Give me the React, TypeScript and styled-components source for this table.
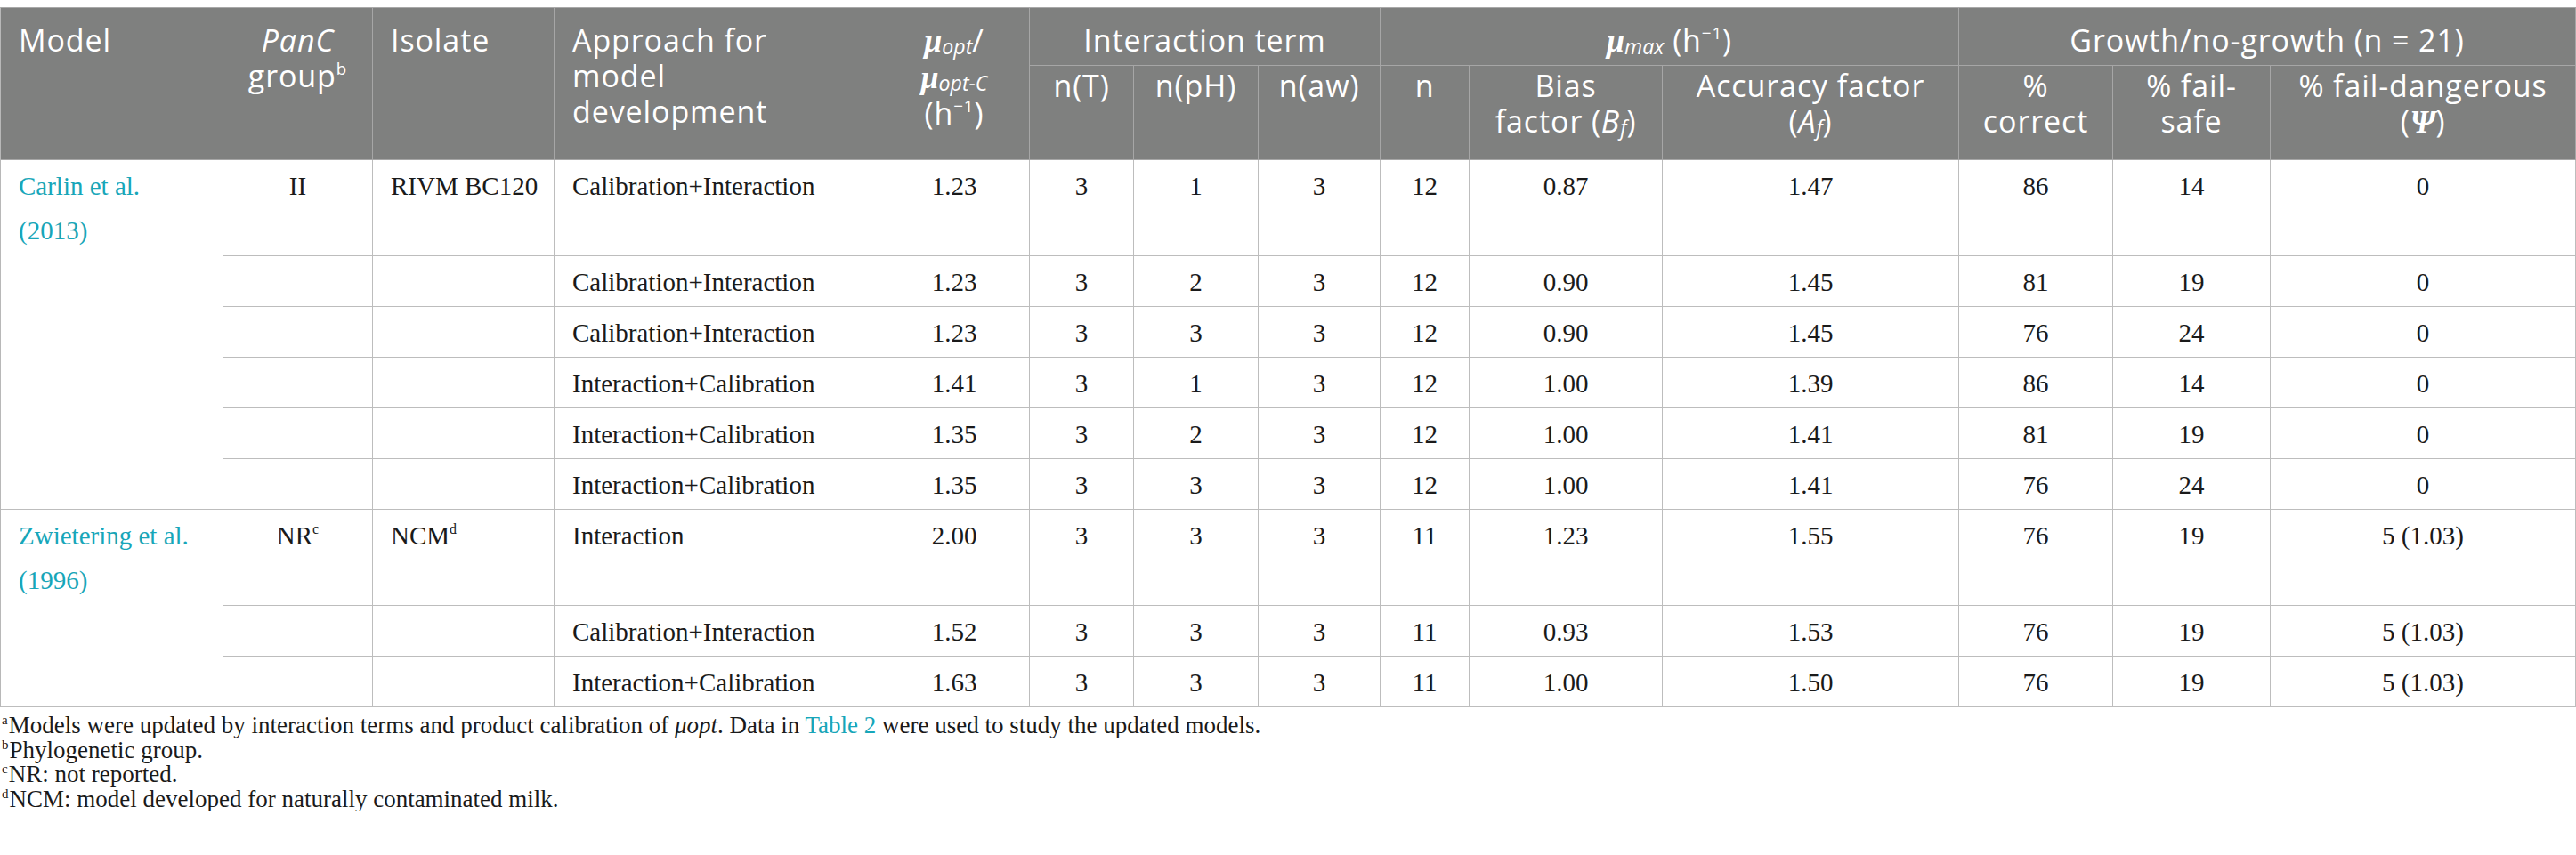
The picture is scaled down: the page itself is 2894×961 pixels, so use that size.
import styled, { createGlobalStyle } from "styled-components"

type Row = {
  model?: { name: string; year: string; span: number }
  group?: { text: string; note: string }
  isolate?: { text: string; note?: string }
  approach: string
  values: string[]
  tall?: boolean
  showGroupCells?: boolean
}

const GlobalStyle = createGlobalStyle`
  html, body {
    margin: 0;
    padding: 0;
    background: #ffffff;
  }
`

const Page = styled.div`
  padding-top: 8px;
  width: 2894px;
`

const Table = styled.table`
  width: 2893px;
  table-layout: fixed;
  border-collapse: separate;
  border-spacing: 0;
  border-top: 1px solid #a9a9a9;
  border-left: 1px solid #b8b8b8;
`

const HeadRow = styled.tr<{ $height: number }>`
  height: ${(p) => p.$height}px;
`

const HeadCell = styled.th<{ $align?: "left" | "center" }>`
  background: #7f807f;
  color: #ffffff;
  font-family: "Open Sans", "Noto Sans", sans-serif;
  font-weight: 400;
  font-size: 34px;
  letter-spacing: 0.9px;
  line-height: 40px;
  text-align: ${(p) => p.$align ?? "center"};
  vertical-align: top;
  padding: 16px 20px 7px 20px;
  border-right: 1px solid #a6a6a6;
  border-bottom: 1px solid #a6a6a6;
  white-space: nowrap;
`

// second header row sits tight under the spanning group titles
const SubHeadCell = styled(HeadCell)`
  padding-top: 2px;
`

const BodyRow = styled.tr<{ $tall?: boolean }>`
  height: ${(p) => (p.$tall ? 108 : 57)}px;
`

const Cell = styled.td<{ $align?: "left" | "center" }>`
  font-family: "Liberation Serif", "Times New Roman", serif;
  font-size: 29px;
  line-height: 50px;
  color: #1a1a1a;
  text-align: ${(p) => p.$align ?? "center"};
  vertical-align: top;
  padding: 4px 20px 2px 20px;
  border-right: 1px solid #bdbdbd;
  border-bottom: 1px solid #bdbdbd;
  white-space: nowrap;
`

const Cite = styled.span`
  color: #17a6b9;
`

const Sup = styled.sup`
  font-size: 0.55em;
  line-height: 0;
  vertical-align: 0.75em;
`

const Mu = styled.span`
  font-family: "Liberation Serif", "Times New Roman", serif;
  font-weight: 700;
  font-style: italic;
  font-size: 36px;
  letter-spacing: 0;
`

const Sub = styled.sub`
  font-style: italic;
  font-size: 0.68em;
  line-height: 0;
  vertical-align: -0.15em;
  letter-spacing: 0;
`

const Ital = styled.i`
  font-style: italic;
`

const Footnotes = styled.div`
  margin-top: 7px;
  padding-left: 2px;
  font-family: "Liberation Serif", "Times New Roman", serif;
  font-size: 27px;
  line-height: 27.5px;
  color: #1a1a1a;
`

const Note = styled.div`
  white-space: nowrap;
`

const NoteMark = styled.sup`
  font-size: 15px;
  line-height: 0;
  vertical-align: 10px;
  margin-right: 1px;
`

const widths = [250, 168, 204, 365, 169, 117, 140, 137, 100, 217, 333, 173, 177, 343]

const rows: Row[] = [
  {
    model: { name: "Carlin et al.", year: "(2013)", span: 6 },
    group: { text: "II", note: "" },
    isolate: { text: "RIVM BC120" },
    approach: "Calibration+Interaction",
    values: ["1.23", "3", "1", "3", "12", "0.87", "1.47", "86", "14", "0"],
    tall: true,
  },
  { approach: "Calibration+Interaction", values: ["1.23", "3", "2", "3", "12", "0.90", "1.45", "81", "19", "0"], showGroupCells: true },
  { approach: "Calibration+Interaction", values: ["1.23", "3", "3", "3", "12", "0.90", "1.45", "76", "24", "0"], showGroupCells: true },
  { approach: "Interaction+Calibration", values: ["1.41", "3", "1", "3", "12", "1.00", "1.39", "86", "14", "0"], showGroupCells: true },
  { approach: "Interaction+Calibration", values: ["1.35", "3", "2", "3", "12", "1.00", "1.41", "81", "19", "0"], showGroupCells: true },
  { approach: "Interaction+Calibration", values: ["1.35", "3", "3", "3", "12", "1.00", "1.41", "76", "24", "0"], showGroupCells: true },
  {
    model: { name: "Zwietering et al.", year: "(1996)", span: 3 },
    group: { text: "NR", note: "c" },
    isolate: { text: "NCM", note: "d" },
    approach: "Interaction",
    values: ["2.00", "3", "3", "3", "11", "1.23", "1.55", "76", "19", "5 (1.03)"],
    tall: true,
  },
  { approach: "Calibration+Interaction", values: ["1.52", "3", "3", "3", "11", "0.93", "1.53", "76", "19", "5 (1.03)"], showGroupCells: true },
  { approach: "Interaction+Calibration", values: ["1.63", "3", "3", "3", "11", "1.00", "1.50", "76", "19", "5 (1.03)"], showGroupCells: true },
]

function HInv() {
  return (
    <>
      (h<Sup>−1</Sup>)
    </>
  )
}

export default function App() {
  return (
    <Page>
      <GlobalStyle />
      <Table>
        <colgroup>
          {widths.map((w, i) => (
            <col key={i} style={{ width: w }} />
          ))}
        </colgroup>
        <thead>
          <HeadRow $height={64}>
            <HeadCell $align="left" rowSpan={2}>
              Model
            </HeadCell>
            <HeadCell rowSpan={2}>
              <Ital>PanC</Ital>
              <br />
              group<Sup>b</Sup>
            </HeadCell>
            <HeadCell $align="left" rowSpan={2}>
              Isolate
            </HeadCell>
            <HeadCell $align="left" rowSpan={2}>
              Approach for
              <br />
              model
              <br />
              development
            </HeadCell>
            <HeadCell rowSpan={2}>
              <Mu>μ</Mu>
              <Sub>opt</Sub>/
              <br />
              <Mu>μ</Mu>
              <Sub>opt-C</Sub>
              <br />
              <HInv />
            </HeadCell>
            <HeadCell colSpan={3}>Interaction term</HeadCell>
            <HeadCell colSpan={3}>
              <Mu>μ</Mu>
              <Sub>max</Sub> <HInv />
            </HeadCell>
            <HeadCell colSpan={3}>Growth/no-growth (n = 21)</HeadCell>
          </HeadRow>
          <HeadRow $height={106}>
            <SubHeadCell>n(T)</SubHeadCell>
            <SubHeadCell>n(pH)</SubHeadCell>
            <SubHeadCell>n(aw)</SubHeadCell>
            <SubHeadCell>n</SubHeadCell>
            <SubHeadCell>
              Bias
              <br />
              factor (<Ital>B</Ital>
              <Sub>f</Sub>)
            </SubHeadCell>
            <SubHeadCell>
              Accuracy factor
              <br />(<Ital>A</Ital>
              <Sub>f</Sub>)
            </SubHeadCell>
            <SubHeadCell>
              %
              <br />
              correct
            </SubHeadCell>
            <SubHeadCell>
              % fail-
              <br />
              safe
            </SubHeadCell>
            <SubHeadCell>
              % fail-dangerous
              <br />(<Mu>Ψ</Mu>)
            </SubHeadCell>
          </HeadRow>
        </thead>
        <tbody>
          {rows.map((r, i) => (
            <BodyRow key={i} $tall={r.tall}>
              {r.model && (
                <Cell $align="left" rowSpan={r.model.span}>
                  <Cite>
                    {r.model.name}
                    <br />
                    {r.model.year}
                  </Cite>
                </Cell>
              )}
              {r.group && (
                <Cell>
                  {r.group.text}
                  {r.group.note && <Sup>{r.group.note}</Sup>}
                </Cell>
              )}
              {r.isolate && (
                <Cell $align="left">
                  {r.isolate.text}
                  {r.isolate.note && <Sup>{r.isolate.note}</Sup>}
                </Cell>
              )}
              {r.showGroupCells && (
                <>
                  <Cell />
                  <Cell />
                </>
              )}
              <Cell $align="left">{r.approach}</Cell>
              {r.values.map((v, j) => (
                <Cell key={j}>{v}</Cell>
              ))}
            </BodyRow>
          ))}
        </tbody>
      </Table>
      <Footnotes>
        <Note>
          <NoteMark>a</NoteMark>Models were updated by interaction terms and product calibration of <Ital>μopt</Ital>. Data in{" "}
          <Cite>Table 2</Cite> were used to study the updated models.
        </Note>
        <Note>
          <NoteMark>b</NoteMark>Phylogenetic group.
        </Note>
        <Note>
          <NoteMark>c</NoteMark>NR: not reported.
        </Note>
        <Note>
          <NoteMark>d</NoteMark>NCM: model developed for naturally contaminated milk.
        </Note>
      </Footnotes>
    </Page>
  )
}
